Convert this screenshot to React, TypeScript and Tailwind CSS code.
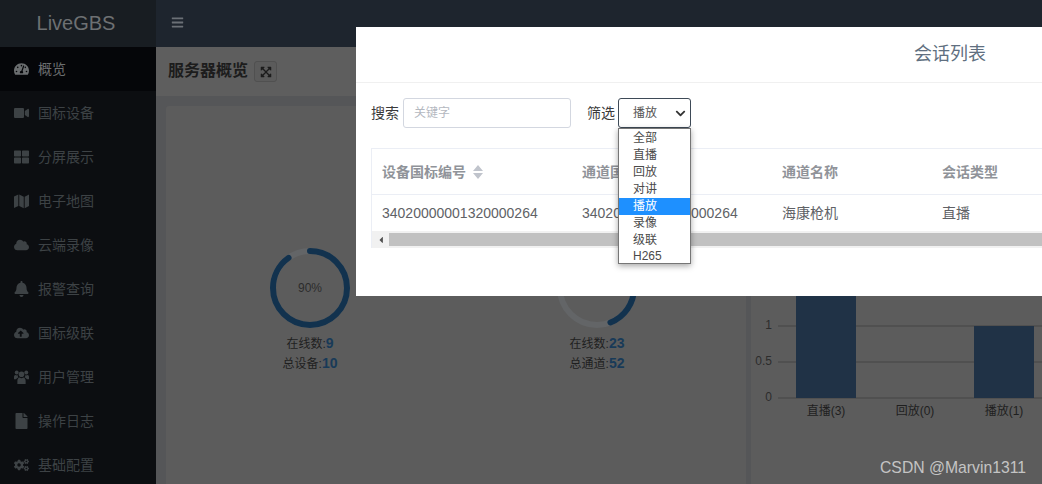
import { FaBars, FaBell, FaCloud, FaCloudUploadAlt, FaCogs, FaExpandArrowsAlt, FaFile, FaTachometerAlt, FaThLarge, FaVideo, FaChevronDown, FaCaretLeft } from 'react-icons/fa';

const CJK = "font-['Liberation_Sans','Noto_Sans_CJK_SC',sans-serif]";

// FontAwesome 5 has no tall map / users like the ones in the picture
function MapIcon({ className }: { className?: string }) {
  return (
    <svg viewBox="0 0 16 16" fill="currentColor" className={className} width="16" height="16">
      <path d="M0 3.2 4.6 1v12.2L0 15.4zM5.6 1l4.8 2.4v12.2l-4.8-2.4zM11.4 3.4 16 1v12.2l-4.6 2.4z" />
    </svg>
  );
}

function UsersIcon({ className }: { className?: string }) {
  return (
    <svg viewBox="0 0 16 16" fill="currentColor" className={className} width="16" height="16">
      <circle cx="8" cy="5" r="3" />
      <path d="M3.6 15.5v-3.4c0-2.3 1-3.6 2.6-3.6.5.5 1.1.8 1.8.8s1.300-.3 1.800-.8c1.600 0 2.600 1.300 2.600 3.600v3.400z" />
      <circle cx="2.900" cy="3.200" r="2.100" />
      <circle cx="13.100" cy="3.200" r="2.100" />
      <path d="M0 10.500V8c0-1.300.7-2.100 1.700-2.100.7.500 1.500.6 2.300.300-.1.900.2 1.700.8 2.300-1.300.4-2.100 1-2.600 2zM16 10.500V8c0-1.300-.7-2.100-1.700-2.100-.7.500-1.500.6-2.300.300.1.900-.2 1.700-.8 2.300 1.300.4 2.100 1 2.600 2z" />
    </svg>
  );
}

const MENU = [
  { label: '概览', icon: FaTachometerAlt, active: true },
  { label: '国标设备', icon: FaVideo },
  { label: '分屏展示', icon: FaThLarge },
  { label: '电子地图', icon: MapIcon },
  { label: '云端录像', icon: FaCloud },
  { label: '报警查询', icon: FaBell },
  { label: '国标级联', icon: FaCloudUploadAlt },
  { label: '用户管理', icon: UsersIcon },
  { label: '操作日志', icon: FaFile },
  { label: '基础配置', icon: FaCogs },
];

const OPTIONS = ['全部', '直播', '回放', '对讲', '播放', '录像', '级联'];

function Donut({ value, online, total, totalLabel }: { value: number; online: number; total: number; totalLabel: string }) {
  const r = 37;
  const c = 2 * Math.PI * r;
  return (
    <div className="flex flex-col items-center">
      <svg width="82" height="82" viewBox="0 0 82 82" className="-rotate-90">
        <circle cx="41" cy="41" r={r} fill="none" stroke="#636567" strokeWidth="6" />
        <circle cx="41" cy="41" r={r} fill="none" stroke="#12324e" strokeWidth="6" strokeLinecap="round" strokeDasharray={`${c * value} ${c}`} />
      </svg>
      <div className="mt-1 text-xs text-[#1f1f1f] text-center">
        <div className="h-5 leading-5">在线数:<b className="text-sm leading-5 text-[#183a58]">{online}</b></div>
        <div className="h-5 leading-5">{totalLabel}:<b className="text-sm leading-5 text-[#183a58]">{total}</b></div>
      </div>
    </div>
  );
}

export default function App() {
  return (
    <div className={`relative flex h-[484px] w-[1042px] overflow-hidden bg-[#555658] ${CJK}`}>
      {/* Sidebar */}
      <aside className="flex w-[156px] shrink-0 flex-col bg-[#0c0e11]">
        <div className="flex h-[47px] shrink-0 items-center justify-center bg-[#181d22] pb-[2px] pr-1 text-xl text-[#6d7072]">LiveGBS</div>
        {MENU.map(item => (
          <div key={item.label} className={`flex h-11 shrink-0 items-center pl-[14px] text-sm ${item.active ? 'bg-[#050609] text-[#6b6e70]' : 'text-[#3d4245]'}`}>
            <item.icon className="w-[15px] text-[16px]" />
            <span className="ml-[9px]">{item.label}</span>
          </div>
        ))}
      </aside>

      {/* Main */}
      <div className="flex min-w-0 flex-1 flex-col">
        <header className="flex h-[47px] shrink-0 items-center bg-[#1e252e] pb-[2px] pl-[15px] text-[#6b7076]">
          <FaBars className="text-[13px]" />
        </header>
        <div className="flex h-[49px] shrink-0 items-start bg-[#5e5e5e] pl-3 pt-[14px]">
          <span className="text-base font-bold leading-5 text-[#1c1c1c]">服务器概览</span>
          <span className="ml-[6px] flex h-[21px] w-[23px] items-center justify-center rounded-[3px] border border-[#505050] bg-[#5b5b5b] text-[#1c1c1c]">
            <FaExpandArrowsAlt className="text-xs" />
          </span>
        </div>
        <div className="flex min-h-0 flex-1 gap-[5px] pl-[10px] pt-[10px]">
          <section className="flex w-[580px] shrink-0 justify-between rounded-t-[3px] bg-[#5c5c5c] pl-[103px] pr-[108px] pt-[141px]">
            <div className="relative">
              <Donut value={0.9} online={9} total={10} totalLabel="总设备" />
              <span className="absolute left-0 right-0 top-[33px] text-center text-xs text-[#2c2c2c]">90%</span>
            </div>
            <Donut value={0.44} online={23} total={52} totalLabel="总通道" />
          </section>
          <section className="min-w-0 flex-1 bg-[#5c5c5c]">
            <svg width="300" height="320" className="block">
              <g stroke="#454545">
                <line x1="27" y1="220" x2="300" y2="220" />
                <line x1="27" y1="256" x2="300" y2="256" />
                <line x1="27" y1="292" x2="300" y2="292" />
              </g>
              <rect x="45" y="100" width="60" height="192" fill="#203246" />
              <rect x="223" y="220" width="60" height="72" fill="#203246" />
              <g fontSize="12" fill="#2c2c2c" textAnchor="end">
                <text x="21" y="223">1</text>
                <text x="21" y="259">0.5</text>
                <text x="21" y="295">0</text>
              </g>
              <g fontSize="12" fill="#1f1f1f" textAnchor="middle">
                <text x="75" y="309">直播(3)</text>
                <text x="164" y="309">回放(0)</text>
                <text x="253" y="309">播放(1)</text>
              </g>
            </svg>
          </section>
        </div>
      </div>

      {/* Modal */}
      <div className="absolute left-[356px] top-[27px] h-[269px] w-[1188px] bg-white">
        <div className="flex h-[56px] items-center justify-center border-b border-[#f0f0f0] pb-px text-lg text-[#606f80]">会话列表</div>
        <div className="mt-[15px] flex items-center pl-[15px] text-sm text-[#3a3a3a]">
          <span>搜索</span>
          <div className="ml-1 flex h-[30px] w-[168px] items-center rounded-[3px] border border-[#d3d7e0] pl-[10px] text-xs text-[#b4b8bf]">关键字</div>
          <span className="ml-4">筛选</span>
          <div className="relative ml-[3px] flex h-[30px] w-[73px] items-center rounded-[3px] border border-[#3e4a57] pl-[14px] text-xs text-[#555]">
            播放
            <FaChevronDown className="absolute right-1 text-[11px] text-[#333]" />
            <ul className="absolute left-[-1px] top-[29px] z-10 w-[73px] border border-[#767676] bg-white pt-px text-xs leading-[17px] text-[#4a4a4a] shadow-[0_2px_6px_rgba(0,0,0,0.35)]">
              {OPTIONS.map(o => (
                <li key={o} className={`pl-[14px] ${o === '播放' ? 'bg-[#1e90ff] text-white' : ''}`}>{o}</li>
              ))}
              <li className="pl-[14px] leading-[14px]">H265</li>
            </ul>
          </div>
        </div>
        <div className="ml-[15px] mt-5 w-[1100px] border-l border-t border-[#ebeef5] text-sm">
          <div className="flex h-[46px] items-center border-b border-[#ebeef5] font-bold text-[#909399]">
            <div className="flex w-[200px] items-center pl-[10px]">
              设备国标编号
              <svg width="10" height="14" viewBox="0 0 10 14" className="ml-[7px]" fill="#c0c4cc">
                <path d="M5 0l5 6H0zM5 14l5-6H0z" />
              </svg>
            </div>
            <div className="w-[200px] pl-[10px]">通道国标编号</div>
            <div className="w-[160px] pl-[10px]">通道名称</div>
            <div className="w-[160px] pl-[10px]">会话类型</div>
          </div>
          <div className="flex h-[36px] items-center text-[#606266]">
            <div className="w-[200px] pl-[10px]">34020000001320000264</div>
            <div className="w-[200px] pl-[10px]">34020000001320000264</div>
            <div className="w-[160px] pl-[10px]">海康枪机</div>
            <div className="w-[160px] pl-[10px]">直播</div>
          </div>
          {/* Scrollbar */}
          <div className="flex h-[17px] items-center bg-[#f1f1f1]">
            <div className="flex w-[17px] justify-center text-[10px] text-[#505050]"><FaCaretLeft /></div>
            <div className="h-[13px] w-[900px] bg-[#c1c1c1]" />
          </div>
        </div>
      </div>

      <div className="absolute left-[880px] top-[459px] text-[15.75px] leading-[18px] text-[#c4c4c4]">CSDN @Marvin1311</div>
    </div>
  );
}
